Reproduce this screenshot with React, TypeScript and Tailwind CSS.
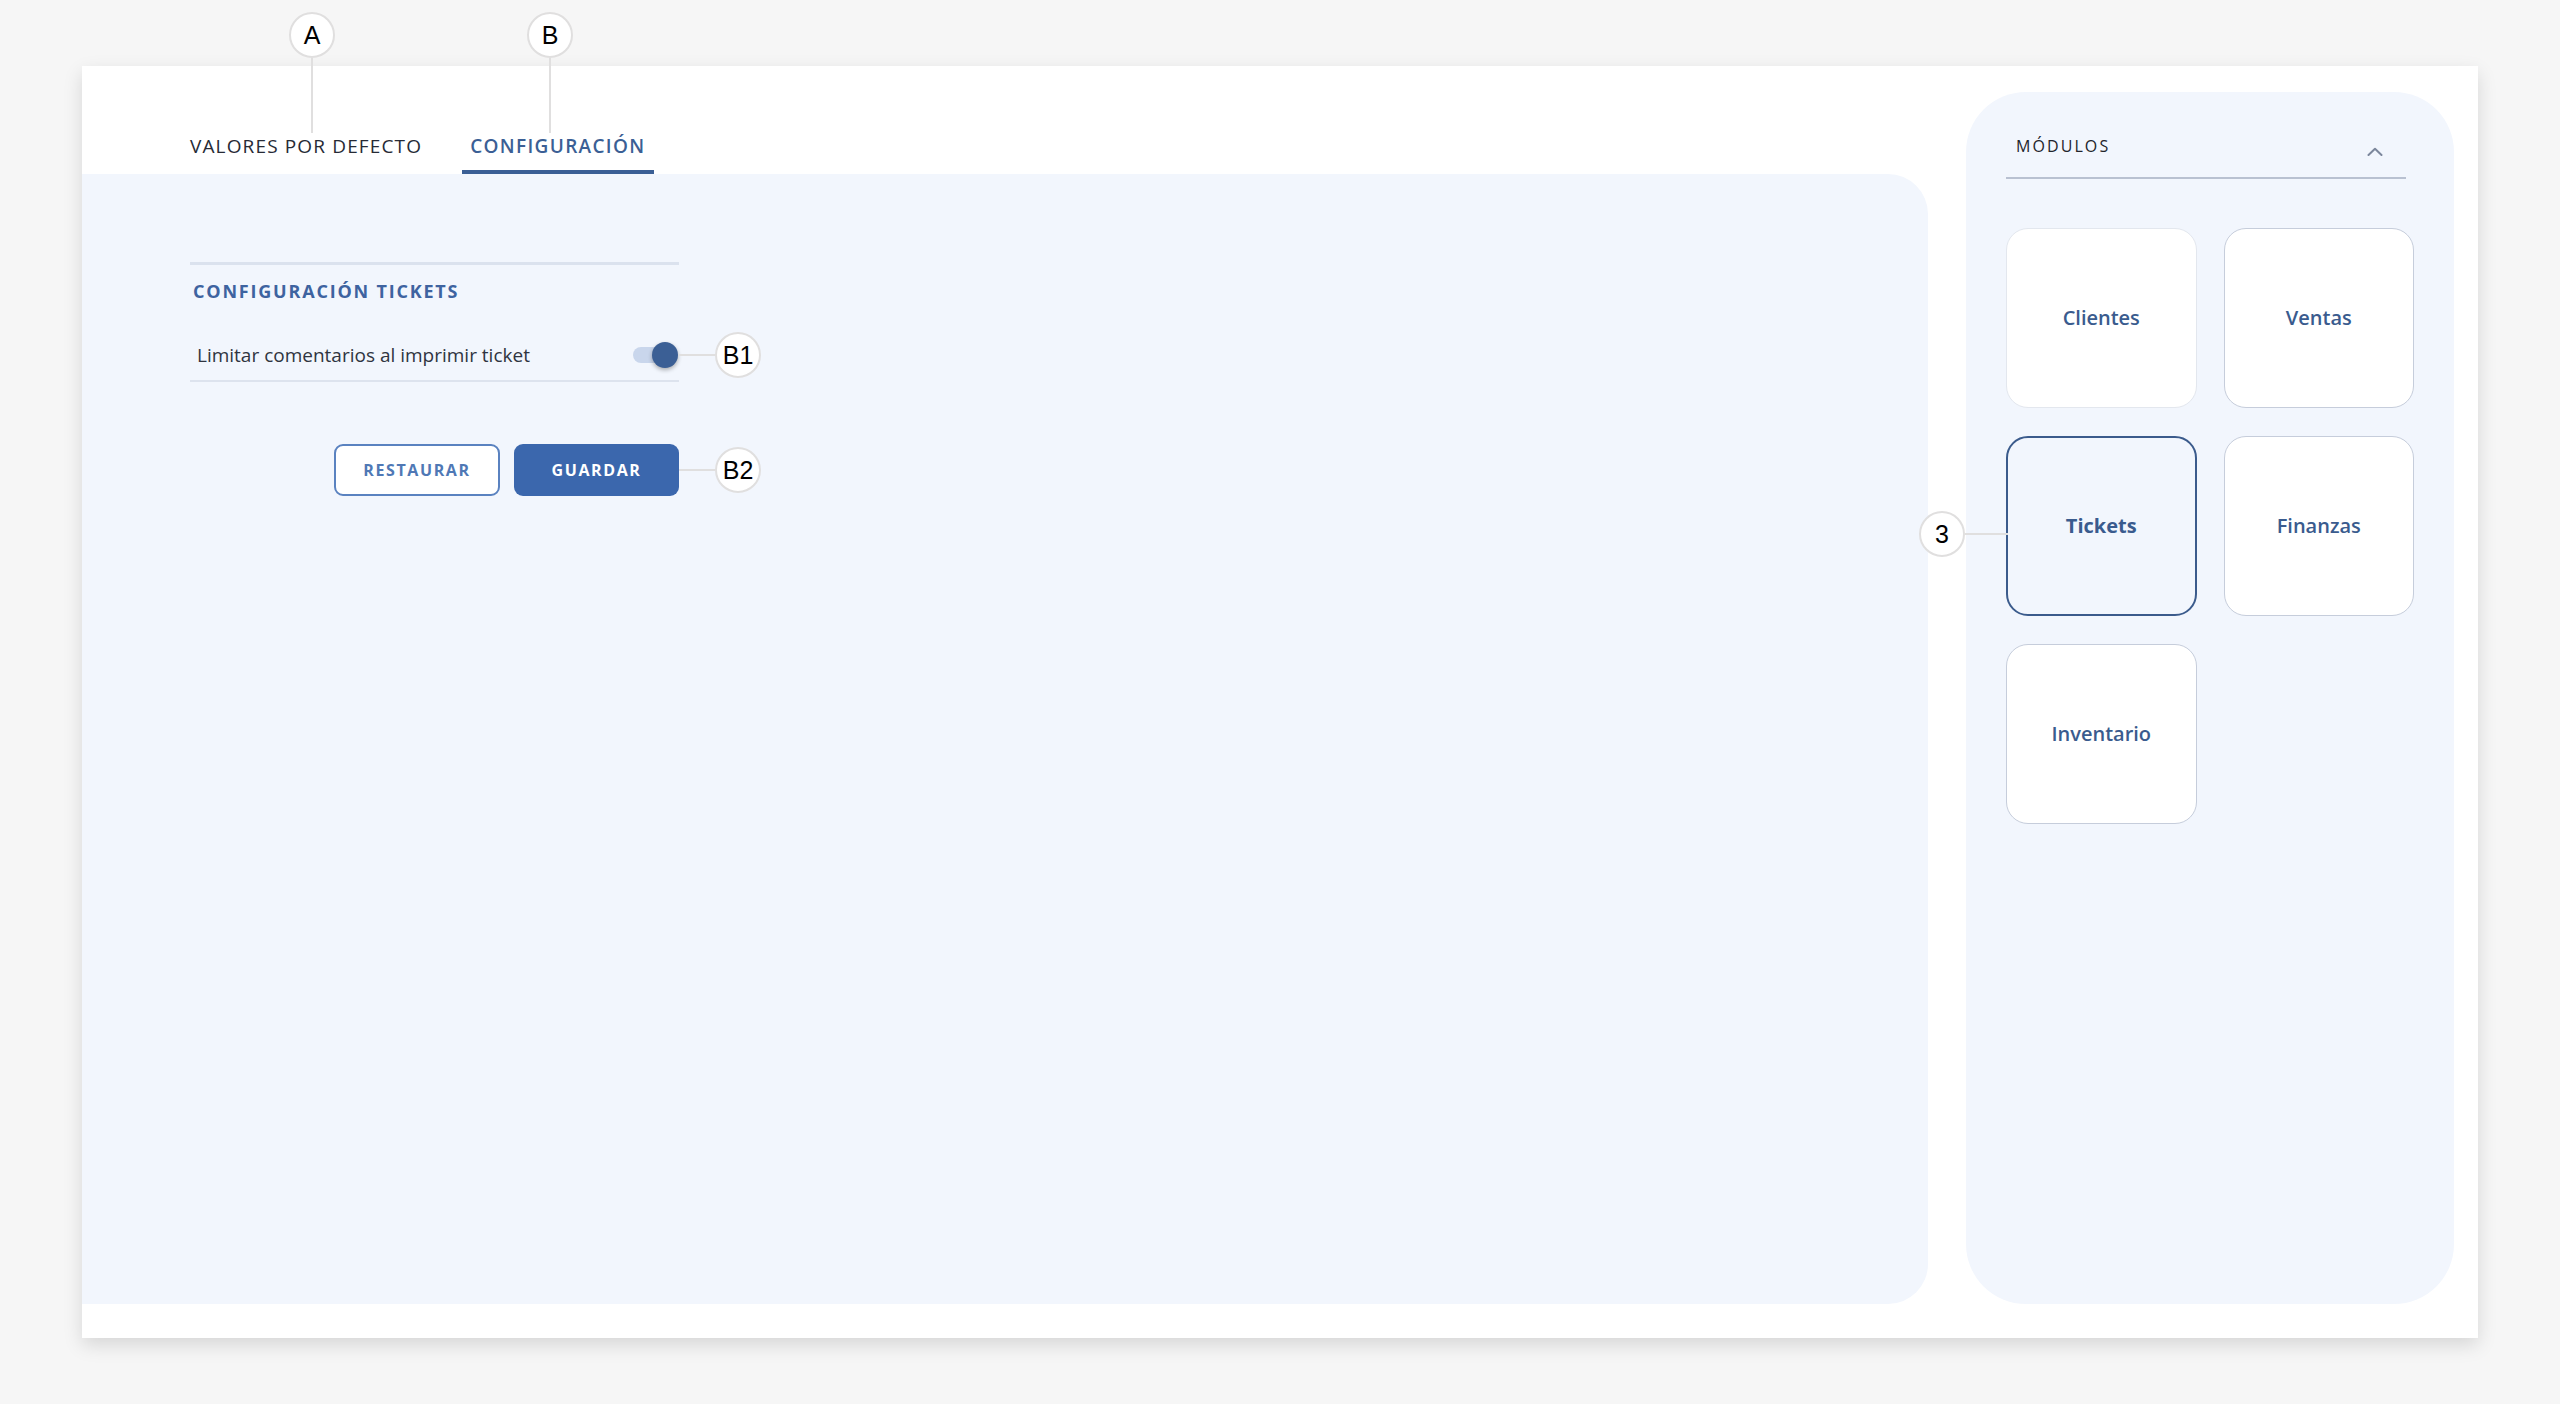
import React from "react";

function Marker({ label }: { label: string }) {
  return (
    <div className="w-[46px] h-[46px] shrink-0 rounded-full border-2 border-[#e0dfdf] bg-white flex items-center justify-center font-['Liberation_Sans',Arial,sans-serif] text-[25px] leading-none text-black">
      {label}
    </div>
  );
}

function SideMarker({ label, line }: { label: string; line: number }) {
  return (
    <div className="absolute left-full top-1/2 -translate-y-1/2 flex items-center">
      <div className="h-[2px] bg-[#e0dfdf]" style={{ width: line }} />
      <Marker label={label} />
    </div>
  );
}

function TopMarker({ label, left }: { label: string; left: number }) {
  return (
    <div className="absolute top-[-54px] flex flex-col items-center" style={{ left }}>
      <Marker label={label} />
      <div className="w-[2px] h-[75px] bg-[#e0dfdf]" />
    </div>
  );
}

type Mod = { name: string; active?: boolean; faint?: boolean };

const modules: Mod[] = [
  { name: "Clientes", faint: true },
  { name: "Ventas" },
  { name: "Tickets", active: true },
  { name: "Finanzas" },
  { name: "Inventario" },
];

function ModuleCard({ m }: { m: Mod }) {
  if (m.active) {
    return (
      <div className="relative h-[180px] rounded-[22px] border-2 border-[#3b5b8c] bg-[#f2f6fd] flex items-center justify-center">
        <span className="text-[20px] font-bold text-[#3a5b8e]">{m.name}</span>
        <div className="absolute right-full top-[73px] flex items-center">
          <Marker label="3" />
          <div className="w-[43px] h-[2px] bg-[#e0dfdf]" />
        </div>
      </div>
    );
  }
  return (
    <div
      className={
        m.faint
          ? "h-[180px] rounded-[22px] border border-[#e3e7ee] bg-white flex items-center justify-center"
          : "h-[180px] rounded-[22px] border border-[#c6cddb] bg-white flex items-center justify-center"
      }
    >
      <span className="text-[20px] font-semibold text-[#3a5b8e]">{m.name}</span>
    </div>
  );
}

export default function App() {
  return (
    <div className="min-h-[1404px] w-[2560px] bg-[#f6f6f6] pt-[66px] pl-[82px] font-['Open_Sans',Arial,sans-serif]">
      <div className="relative w-[2396px] h-[1272px] bg-white shadow-[0_7px_18px_rgba(0,0,0,0.13)] flex">
        <TopMarker label="A" left={207} />
        <TopMarker label="B" left={445} />

        {/* main column */}
        <div className="w-[1846px] flex flex-col pb-[34px]">
          <div className="h-[108px] shrink-0 flex items-end pl-[100px] gap-[32px]">
            <div className="px-[8px] pb-[12px] border-b-4 border-transparent text-[19px] leading-[24px] tracking-[0.06em] text-[#262a35]">
              VALORES POR DEFECTO
            </div>
            <div className="px-[8px] pb-[12px] border-b-4 border-[#3b5f95] text-[19px] leading-[24px] tracking-[0.07em] font-semibold text-[#3b5f95]">
              CONFIGURACIÓN
            </div>
          </div>

          <div className="flex-1 bg-[#f2f6fd] rounded-r-[40px] pl-[108px] pt-[88px]">
            <div className="w-[489px]">
              <div className="h-[3px] bg-[#dbe2ee]" />
              <div className="mt-[14px] pl-[3px] text-[18px] leading-[24px] font-bold tracking-[0.1em] text-[#3e63a0]">
                CONFIGURACIÓN TICKETS
              </div>

              <div className="relative mt-[27px] h-[52px] flex items-center justify-between border-b-2 border-[#dde3ee] pl-[7px] pr-[1px]">
                <span className="text-[19px] leading-[24px] text-[#2f3440]">
                  Limitar comentarios al imprimir ticket
                </span>
                <div className="relative w-[45px] h-[26px]">
                  <div className="absolute left-0 top-[5px] w-[40px] h-[16px] rounded-full bg-[#c9d6ec]" />
                  <div className="absolute right-0 top-0 w-[26px] h-[26px] rounded-full bg-[#3b5f95] shadow-[0_2px_4px_rgba(0,0,0,0.3)]" />
                </div>
                <SideMarker label="B1" line={36} />
              </div>

              <div className="relative mt-[62px] flex justify-end gap-[14px]">
                <button className="w-[166px] h-[52px] rounded-[9px] border-2 border-[#5a82c0] bg-white text-[16px] font-bold tracking-[0.1em] text-[#4f78b5]">
                  RESTAURAR
                </button>
                <button className="w-[165px] h-[52px] rounded-[9px] bg-[#3b67ad] text-[16px] font-bold tracking-[0.1em] text-white">
                  GUARDAR
                </button>
                <SideMarker label="B2" line={36} />
              </div>
            </div>
          </div>
        </div>

        {/* modules column */}
        <div className="ml-[38px] w-[488px] pt-[26px] pb-[34px]">
          <div className="h-full bg-[#f2f6fd] rounded-[60px] px-[40px] pt-[43px]">
            <div className="mr-[8px] flex items-center justify-between border-b-2 border-[#b9c1d1] pb-[20px] pl-[10px] pr-[23px]">
              <span className="text-[16px] leading-[22px] tracking-[0.13em] text-[#22252b]">
                MÓDULOS
              </span>
              <svg width="16" height="9" viewBox="0 0 16 9" className="mt-[10px]">
                <polyline
                  points="1.5,8 8,1.8 14.5,8"
                  fill="none"
                  stroke="#7c879c"
                  strokeWidth="2"
                  strokeLinecap="round"
                  strokeLinejoin="round"
                />
              </svg>
            </div>

            <div className="mt-[49px] grid grid-cols-2 gap-x-[27px] gap-y-[28px]">
              {modules.map((m) => (
                <ModuleCard key={m.name} m={m} />
              ))}
            </div>
          </div>
        </div>
      </div>
    </div>
  );
}
